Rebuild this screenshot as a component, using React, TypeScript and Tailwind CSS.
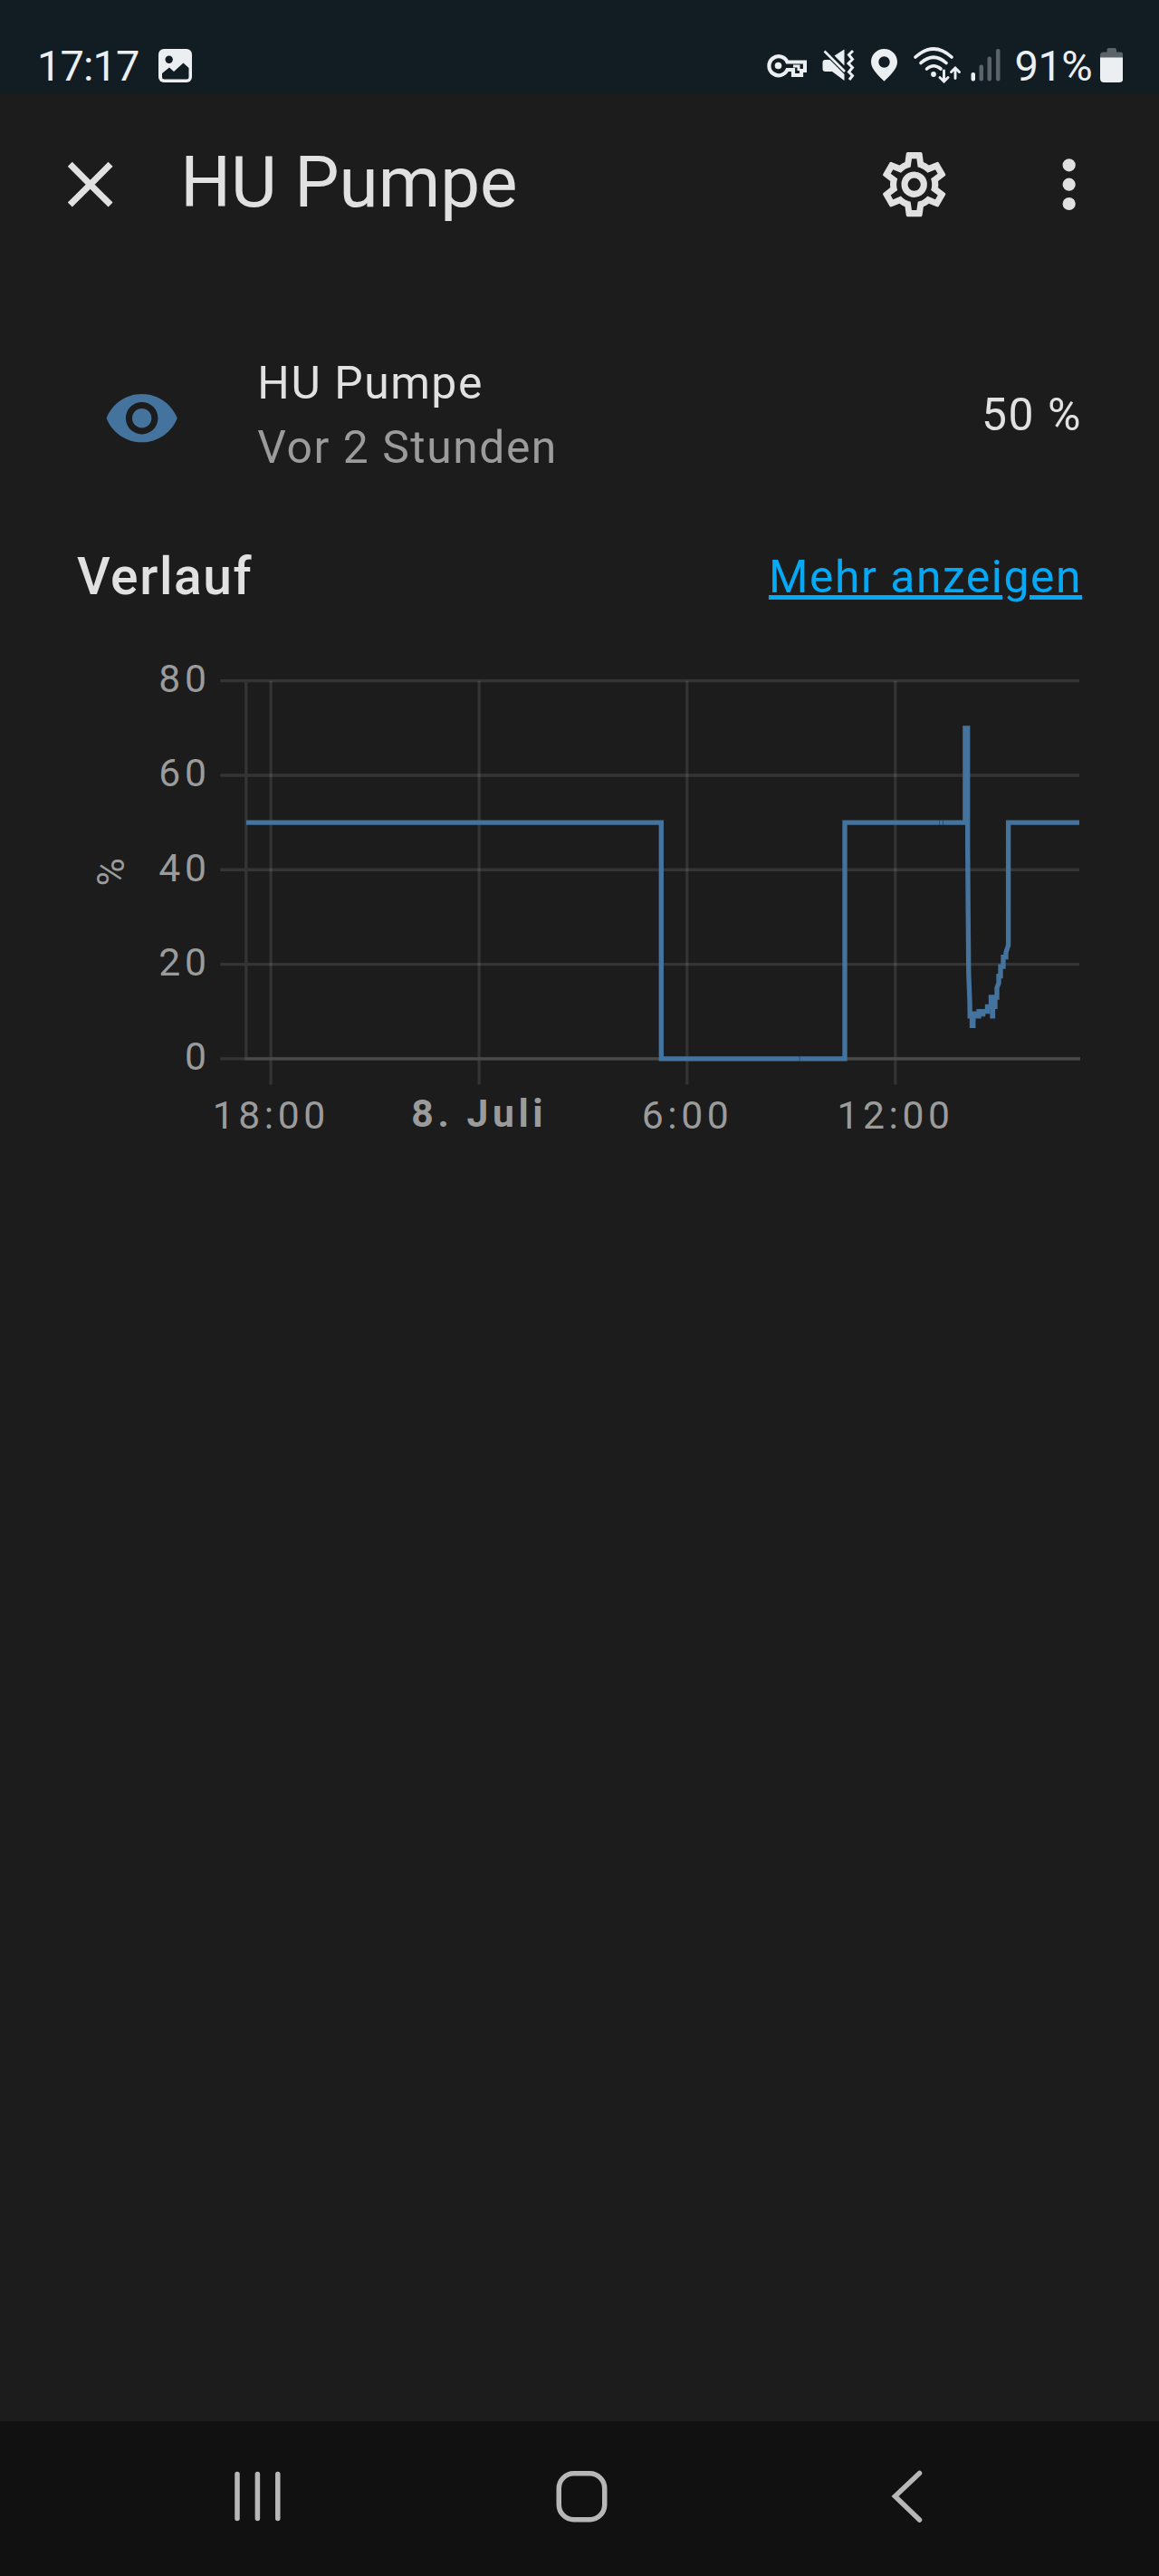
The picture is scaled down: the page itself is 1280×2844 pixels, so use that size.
import React from 'react';

type Point = [number, number];

const ICONS = {
  close:
    'M19,6.41L17.59,5L12,10.59L6.41,5L5,6.41L10.59,12L5,17.59L6.41,19L12,13.41L17.59,19L19,17.59L13.41,12L19,6.41Z',
  cog: 'M12,8A4,4 0 0,1 16,12A4,4 0 0,1 12,16A4,4 0 0,1 8,12A4,4 0 0,1 12,8M12,10A2,2 0 0,0 10,12A2,2 0 0,0 12,14A2,2 0 0,0 14,12A2,2 0 0,0 12,10M10,22C9.75,22 9.54,21.82 9.5,21.58L9.13,18.93C8.5,18.68 7.96,18.34 7.44,17.94L4.95,18.95C4.73,19.03 4.46,18.95 4.34,18.73L2.34,15.27C2.21,15.05 2.27,14.78 2.46,14.63L4.57,12.97L4.5,12L4.57,11L2.46,9.37C2.27,9.22 2.21,8.95 2.34,8.73L4.34,5.27C4.46,5.05 4.73,4.96 4.95,5.05L7.44,6.05C7.96,5.66 8.5,5.32 9.13,5.07L9.5,2.42C9.54,2.18 9.75,2 10,2H14C14.25,2 14.46,2.18 14.5,2.42L14.87,5.07C15.5,5.32 16.04,5.66 16.56,6.05L19.05,5.05C19.27,4.96 19.54,5.05 19.66,5.27L21.66,8.73C21.79,8.95 21.73,9.22 21.54,9.37L19.43,11L19.5,12L19.43,13L21.54,14.63C21.73,14.78 21.79,15.05 21.66,15.27L19.66,18.73C19.54,18.95 19.27,19.04 19.05,18.95L16.56,17.95C16.04,18.34 15.5,18.68 14.87,18.93L14.5,21.58C14.46,21.82 14.25,22 14,22H10M11.25,4L10.88,6.61C9.68,6.86 8.62,7.5 7.85,8.39L5.44,7.35L4.69,8.65L6.8,10.2C6.4,11.37 6.4,12.64 6.8,13.8L4.68,15.36L5.43,16.66L7.86,15.62C8.63,16.5 9.68,17.14 10.87,17.38L11.24,20H12.76L13.13,17.39C14.32,17.14 15.37,16.5 16.14,15.62L18.57,16.66L19.32,15.36L17.2,13.81C17.6,12.64 17.6,11.37 17.2,10.2L19.31,8.65L18.56,7.35L16.15,8.39C15.38,7.5 14.32,6.86 13.12,6.62L12.75,4H11.25Z',
  dots: 'M12,16A2,2 0 0,1 14,18A2,2 0 0,1 12,20A2,2 0 0,1 10,18A2,2 0 0,1 12,16M12,10A2,2 0 0,1 14,12A2,2 0 0,1 12,14A2,2 0 0,1 10,12A2,2 0 0,1 12,10M12,4A2,2 0 0,1 14,6A2,2 0 0,1 12,8A2,2 0 0,1 10,6A2,2 0 0,1 12,4Z',
  eye: 'M12,9A3,3 0 0,0 9,12A3,3 0 0,0 12,15A3,3 0 0,0 15,12A3,3 0 0,0 12,9M12,17A5,5 0 0,1 7,12A5,5 0 0,1 12,7A5,5 0 0,1 17,12A5,5 0 0,1 12,17M12,4.5C7,4.5 2.73,7.61 1,12C2.73,16.39 7,19.5 12,19.5C17,19.5 21.27,16.39 23,12C21.27,7.61 17,4.5 12,4.5Z',
};

const Icon: React.FC<{ path: string; className?: string }> = ({ path, className }) => (
  <svg viewBox="0 0 24 24" fill="currentColor" className={`w-[85.33px] h-[85.33px] shrink-0 ${className || ''}`}>
    <path d={path} />
  </svg>
);

const StatusBar = () => (
  <div className="h-[104px] shrink-0 bg-[#121d23] text-[#eceff1] flex items-start justify-between pl-[41px] pr-10 pt-[52px]">
    <div className="flex items-start">
      <span className="w-[134px] pt-px text-[47px] leading-[40px] tracking-[-0.9px]">17:17</span>
      <svg width="37" height="37" viewBox="0 0 37 37" className="mt-[2px]">
        <rect width="37" height="37" rx="6" fill="currentColor" />
        <circle cx="11.7" cy="11.7" r="4.2" fill="#121d23" />
        <path d="M4 27L12 20.5L17 25L27.5 15.5L33.5 21V31Q33.5 33.5 31 33.5H6.500Q4 33.5 4 31Z" fill="#121d23" />
      </svg>
    </div>
    <div className="flex items-start">
      {/* vpn key */}
      <svg width="44" height="25.500" viewBox="0 0 44 25.500" fill="none" stroke="currentColor" strokeWidth="4.200" className="mt-[8px] mr-[17px]">
        <path d="M22.500 8.500A10.500 10.500 0 1 0 22.500 17H29V23H38V18H42V8.500Z" />
        <path d="M29 13H35V18" strokeWidth="3" />
        <circle cx="12.500" cy="12.500" r="3.800" fill="currentColor" stroke="none" />
      </svg>
      {/* muted, vibrating */}
      <svg width="36" height="36" viewBox="0 0 36 36" fill="currentColor" className="mt-[2px] mr-[18px]">
        <path d="M0.500 15Q0.500 12 3.500 12H8.500L24.500 28V35L11 25H3.500Q0.500 25 0.500 22Z" />
        <path d="M13.500 7.500L24.500 0.500V18.500Z" />
        <path d="M2.500 2.500L25 25" stroke="currentColor" strokeWidth="2.600" />
        <path d="M34 2L29.500 6.500L33.500 11.500L29 16L33.500 20.500L29.500 25.500L33.500 29.500L30 34" fill="none" stroke="currentColor" strokeWidth="3" />
      </svg>
      {/* location */}
      <svg width="29" height="36" viewBox="0 0 29 36" fill="currentColor" className="mt-[2px] mr-[18px]">
        <path
          fillRule="evenodd"
          d="M14.500 0C6.500 0 0 6.300 0 14.300C0 23 9 30 14.500 35.800C20 30 29 23 29 14.300C29 6.300 22.500 0 14.500 0ZM14.500 8.300A6.200 6.200 0 1 1 14.500 20.700A6.200 6.200 0 1 1 14.500 8.300Z"
        />
      </svg>
      {/* wifi with traffic arrows */}
      <svg width="53" height="40" viewBox="0 0 53 40" fill="none" stroke="currentColor" strokeWidth="3.600" strokeLinecap="round" className="mr-[10px]">
        <path d="M2 11Q22 -7 42 11" />
        <path d="M8 17.500Q22 5 36 17.500" />
        <path d="M14.500 24Q22 17.500 30 24" />
        <circle cx="22" cy="30" r="2.900" fill="currentColor" stroke="none" />
        <path d="M33.500 26V37M29 33.500L33.500 38L38 33.500" strokeWidth="2.900" />
        <path d="M46 34.500V23.500M41.500 27.500L46 23L50.500 27.500" strokeWidth="2.900" />
      </svg>
      {/* mobile signal */}
      <svg width="33" height="36" viewBox="0 0 33 36" className="mt-[2px] mr-[15px]" fill="#5a6368">
        <rect x="0.500" y="26" width="4.500" height="9.500" rx="2" fill="#eceff1" />
        <rect x="9.500" y="17.500" width="4.500" height="18" rx="2" />
        <rect x="18.500" y="8.500" width="4.500" height="27" rx="2" />
        <rect x="28" y="0" width="4.500" height="35.500" rx="2" />
      </svg>
      <span className="w-[95px] pl-px pt-px text-[47px] leading-[40px] tracking-[-0.500px]">91%</span>
      {/* battery */}
      <svg width="25.500" height="38" viewBox="0 0 25.500 38" className="mt-[1px]">
        <path d="M7.500 2Q7.500 0 9.500 0H16Q18 0 18 2V4.500H22Q25.500 4.500 25.500 8V12H0V8Q0 4.500 3.500 4.500H7.500Z" fill="#5a6368" />
        <path d="M0 10.500H25.500V33.500Q25.500 38 21 38H4.500Q0 38 0 33.500Z" fill="currentColor" />
      </svg>
    </div>
  </div>
);

// chart geometry, in px inside the svg
const ZERO_Y = 468.8;
const UNIT = 5.2135;
const LEFT = 271.8;
const RIGHT = 1192;
const y = (value: number) => ZERO_Y - value * UNIT;

const Y_TICKS = [0, 20, 40, 60, 80];
const X_TICKS = [
  { x: 299.1, label: '18:00', bold: false },
  { x: 529.1, label: '8. Juli', bold: true },
  { x: 758.8, label: '6:00', bold: false },
  { x: 988.8, label: '12:00', bold: false },
];

const HISTORY: Point[] = [
  [272, 50], [730.3, 50], [730.3, 0], [933, 0], [933, 50], [1065.9, 50], [1065.9, 70], [1068.7, 70],
  [1068.7, 45], [1069.2, 31], [1069.8, 18], [1071, 12], [1071.2, 9], [1073.500, 9], [1073.500, 7], [1074.8, 7],
  [1074.8, 9.5], [1077, 9.5], [1077, 9], [1081, 9], [1081, 10], [1085.5, 10], [1085.5, 9], [1086, 10], [1090.5, 10],
  [1090.5, 11], [1094.5, 11], [1094.5, 13], [1096, 13], [1096, 9], [1096.5, 9], [1096.5, 11], [1099, 11],
  [1099, 13], [1101, 13], [1101, 15], [1103, 16], [1103, 17.5], [1105, 17.5], [1105, 19.5], [1108, 19.5], [1108, 21.5],
  [1111, 21.5], [1111, 22.5], [1113.6, 24], [1113.6, 50], [1192, 50],
];

const HistoryChart = () => (
  <svg width="1280" height="580" viewBox="0 0 1280 580" className="block font-[Roboto,sans-serif]">
    <g stroke="#343434" strokeWidth="3.300">
      {Y_TICKS.map(tick => (
        <line key={tick} x1="243.300" x2={RIGHT} y1={y(tick)} y2={y(tick)} />
      ))}
      <line x1={LEFT} x2={LEFT} y1={y(80)} y2={y(0)} />
    </g>
    <g stroke="#e1e1e1" strokeOpacity="0.120" strokeWidth="3.300">
      {X_TICKS.map(tick => (
        <line key={tick.label} x1={tick.x} x2={tick.x} y1={y(80)} y2="497.500" />
      ))}
    </g>
    <line x1="270" x2="1193" y1={ZERO_Y} y2={ZERO_Y} stroke="#494949" strokeWidth="3.300" />
    <polyline points={HISTORY.map(([px, value]) => `${px},${y(value)}`).join(' ')} fill="none" stroke="#44739e" strokeWidth="5.330" />
    <path d="M1037.500 205.500V211M1041.500 205.500V211M883 466V471.500" stroke="#1c1c1c" strokeOpacity="0.400" strokeWidth="1" />
    <g fill="#9b9b9b" fontSize="42.670" letterSpacing="4.600">
      {Y_TICKS.map(tick => (
        <text key={tick} x="232.500" y={y(tick) + 12.5} textAnchor="end">{tick}</text>
      ))}
      {X_TICKS.map(tick => (
        <text key={tick.label} x={tick.x + 0.2} y={tick.bold ? 543.8 : 546} textAnchor="middle" fontWeight={tick.bold ? 700 : 400}>
          {tick.label}
        </text>
      ))}
      <text transform="translate(137 278.500) rotate(-90)">%</text>
    </g>
  </svg>
);

const NavigationBar = () => (
  <div className="h-[171px] shrink-0 bg-[#111111] text-[#b7b7b7] flex items-start pt-[54px] pl-[259px]">
    <svg width="52" height="58" viewBox="0 0 52 58" stroke="currentColor" strokeWidth="5.500" strokeLinecap="round" className="mr-[303px]">
      <path d="M3 4.500V53.500M25.400 4.500V53.500M47.800 4.500V53.500" />
    </svg>
    <svg width="57" height="58" viewBox="0 0 57 58" fill="none" stroke="currentColor" strokeWidth="5.500" className="mr-[313px]">
      <rect x="3.250" y="3.750" width="50.500" height="51" rx="16.500" />
    </svg>
    <svg width="36" height="58" viewBox="0 0 36 58" fill="none" stroke="currentColor" strokeWidth="5.500" strokeLinecap="round">
      <path d="M31.500 3.500L4.500 29L31.500 55" />
    </svg>
  </div>
);

export default function App() {
  return (
    <div className="w-[1280px] h-[2844px] bg-[#1c1c1c] text-[#e1e1e1] flex flex-col overflow-hidden font-[Roboto,sans-serif]">
      <StatusBar />

      <header className="h-[199px] shrink-0 flex items-center pl-[57px] pr-[57px]">
        <Icon path={ICONS.close} />
        <h1 className="flex-1 pl-[57px] pb-1 text-[78.2px] leading-none">HU Pumpe</h1>
        <Icon path={ICONS.cog} className="mr-[85.33px]" />
        <Icon path={ICONS.dots} />
      </header>

      <main className="flex-1">
        <div className="flex items-center h-[142px] mt-[85px] pl-[114px] pr-[85px] text-[49.8px] leading-[71.1px] tracking-[1.556px]">
          <Icon path={ICONS.eye} className="text-[#44739e] mt-1.5" />
          <div className="flex-1 pl-[85px]">
            <div>HU Pumpe</div>
            <div className="text-[#9b9b9b]">Vor 2 Stunden</div>
          </div>
          <div>50 %</div>
        </div>

        <div className="flex items-start justify-between h-[170px] pt-[70px] px-[85px]">
          <h2 className="pt-px text-[56.9px] leading-[72px] font-medium tracking-[1.6px]">Verlauf</h2>
          <a href="#" className="pt-px text-[49.8px] leading-[72px] tracking-[1.556px] text-[#03a9f4] underline decoration-[5px]">
            Mehr anzeigen
          </a>
        </div>

        <HistoryChart />
      </main>

      <NavigationBar />
    </div>
  );
}
